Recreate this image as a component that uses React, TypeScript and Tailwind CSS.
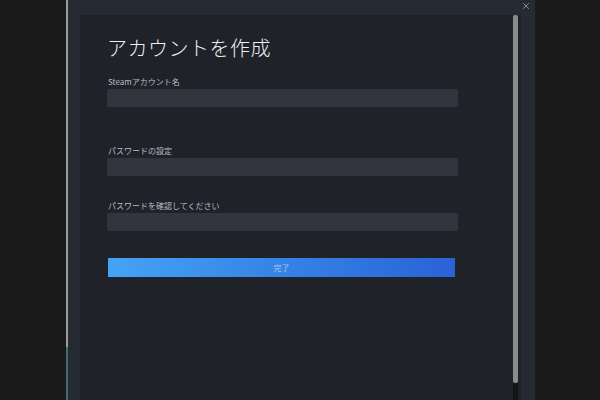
import { X } from "lucide-react";

const font = { fontFamily: '"Noto Sans CJK JP", "Noto Sans", sans-serif' };

function Field({ label }: { label: string }) {
  return (
    <div className="flex flex-col">
      <div className="text-[8px] leading-[10px] text-[#b8bcc4] mb-[2px] pl-[1px]">{label}</div>
      <div className="h-[18px] w-[351px] rounded-[2px] bg-[#32353d]" />
    </div>
  );
}

export default function App() {
  return (
    <div className="w-[600px] h-[400px] bg-[#1a1a1a] flex overflow-hidden" style={font}>
      <div className="w-[66px] shrink-0" />
      <div className="w-[2px] shrink-0 flex flex-col">
        <div className="h-[347px] bg-[#9a9ca0]" />
        <div className="flex-1 bg-[#3f6f72]" />
      </div>
      <div className="w-[467px] shrink-0 bg-[#262a33] flex flex-col relative">
        <div className="absolute right-[4px] top-[1px] text-[#c4c7cc]">
          <X size={10} strokeWidth={1.5} />
        </div>
        <div className="h-[15px]" />
        <div className="flex flex-1 ml-[12px] mr-[14px] bg-[#1f2229]">
          <div className="flex-1 flex flex-col pl-[27px] pt-[20px]">
            <div className="text-[20px] leading-[26px] text-[#eef0f3] font-light tracking-[0.5px]">
              アカウントを作成
            </div>
            <div className="mt-[16px]">
              <Field label="Steamアカウント名" />
            </div>
            <div className="mt-[39px]">
              <Field label="パスワードの設定" />
            </div>
            <div className="mt-[25px]">
              <Field label="パスワードを確認してください" />
            </div>
            <div className="mt-[27px] ml-[1px] h-[19px] w-[347px] bg-gradient-to-r from-[#45a3f4] to-[#2a62d6] flex items-center justify-center text-[8px] text-[#a9c4e6]">
              完了
            </div>
          </div>
          <div className="w-[12px] shrink-0 flex flex-col items-center pt-[0px]">
            <div className="w-[5px] h-[368px] rounded-[2px] bg-[#8a8b8d]" />
            <div className="flex-1 w-[5px] bg-[#141518]" />
          </div>
        </div>
      </div>
      <div className="flex-1" />
    </div>
  );
}
